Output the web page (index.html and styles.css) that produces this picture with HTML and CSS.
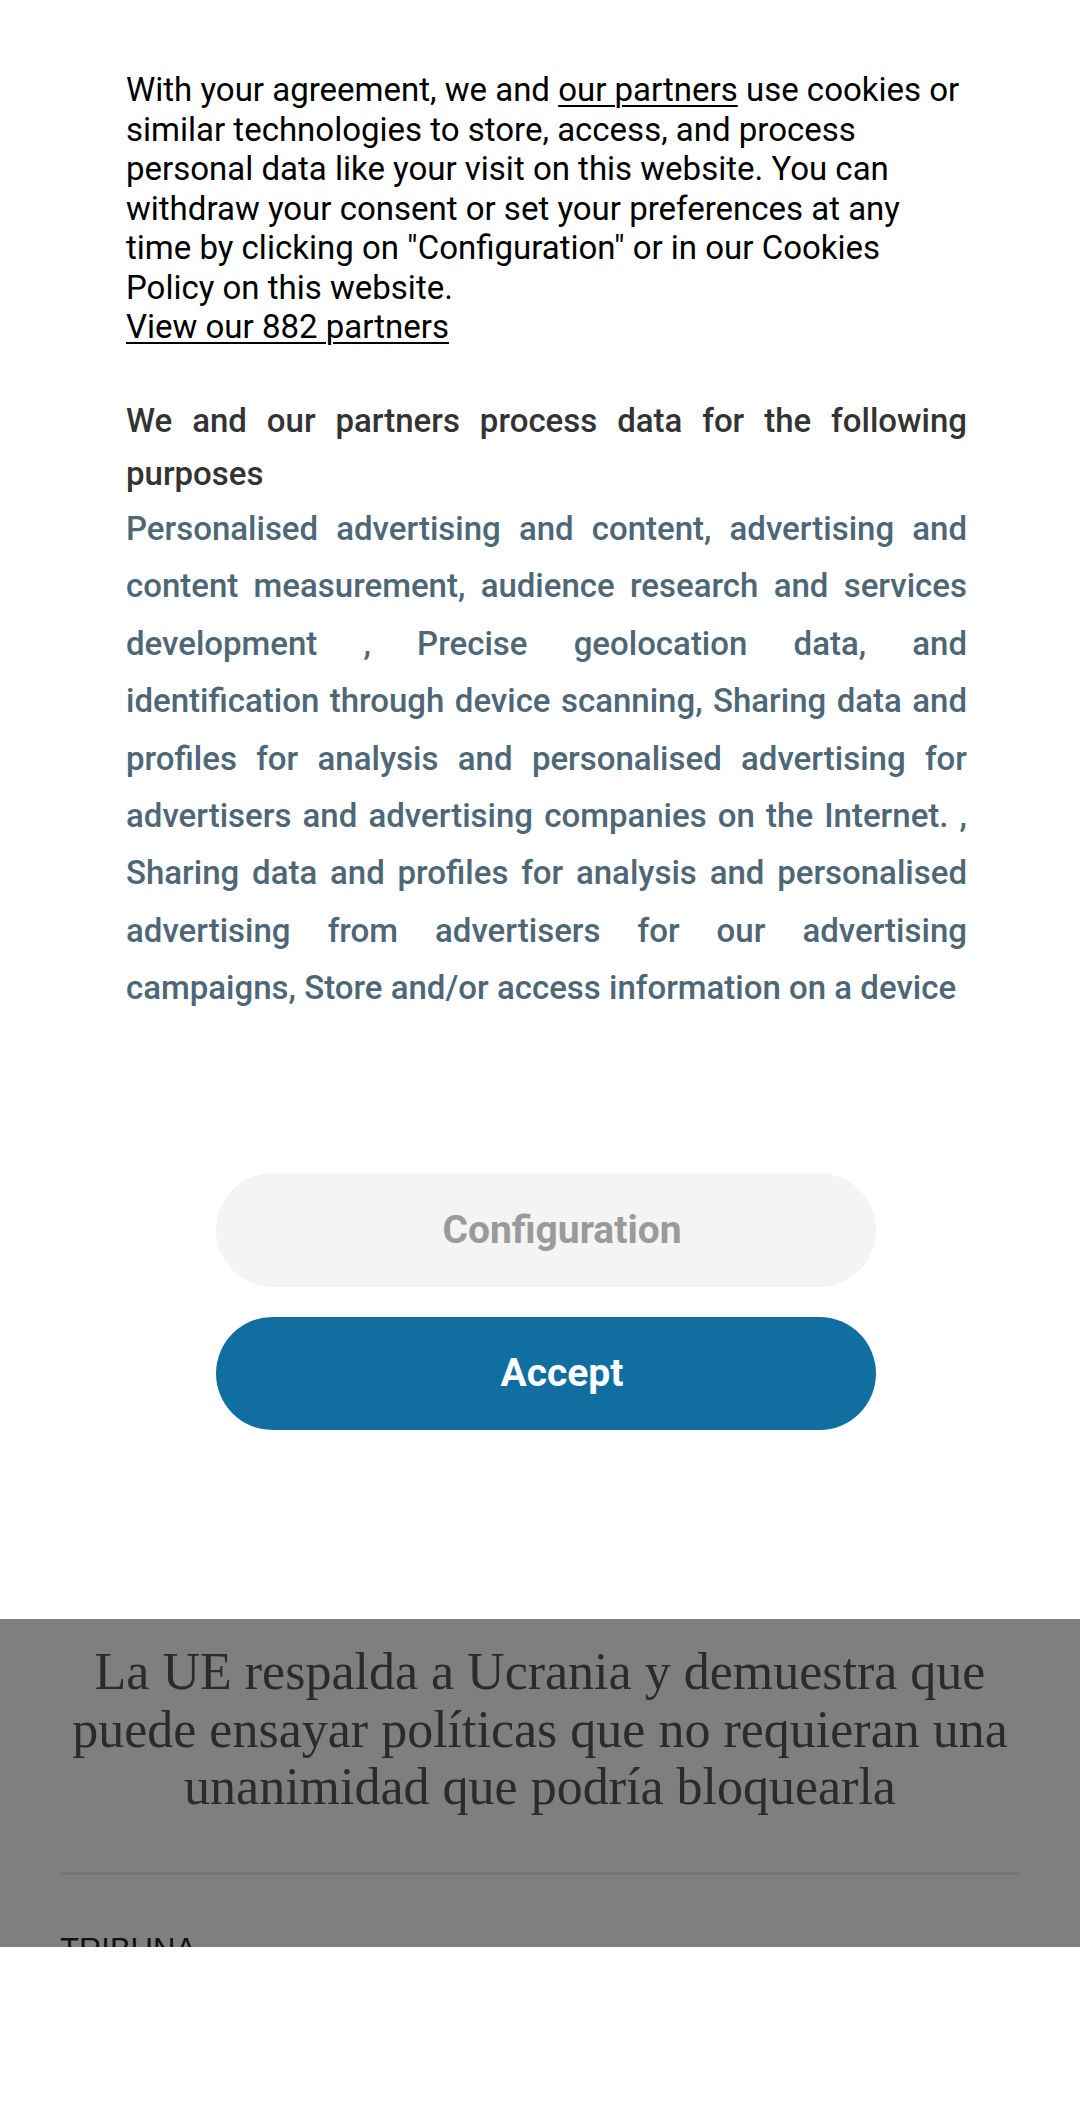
FILE: index.html
```html
<!DOCTYPE html>
<html lang="en">
<head>
<meta charset="utf-8">
<title>Consent</title>
<link rel="stylesheet" href="styles.css">
</head>
<body>
<div class="consent">
  <div class="content">
    <p class="intro">With your agreement, we and <a href="#" class="link">our partners</a> use cookies or similar technologies to store, access, and process personal data like your visit on this website. You can withdraw your consent or set your preferences at any time by clicking on "Configuration" or in our Cookies Policy on this website.<br><a href="#" class="link">View our 882 partners</a></p>
    <p class="purposes-title">We and our partners process data for the following purposes</p>
    <p class="purposes-list">Personalised advertising and content, advertising and content measurement, audience research and services development , Precise geolocation data, and identification through device scanning, Sharing data and profiles for analysis and personalised advertising for advertisers and advertising companies on the Internet. , Sharing data and profiles for analysis and personalised advertising from advertisers for our advertising campaigns, Store and/or access information on a device </p>
  </div>
  <div class="actions">
    <button class="btn btn-config" type="button">Configuration</button>
    <button class="btn btn-accept" type="button">Accept</button>
  </div>
</div>
<div class="article">
  <h1 class="article-title">La UE respalda a Ucrania y demuestra que puede ensayar políticas que no requieran una unanimidad que podría bloquearla</h1>
  <hr class="article-rule">
  <div class="article-section">TRIBUNA</div>
</div>
<div class="bottom"></div>
</body>
</html>
```
FILE: styles.css
```css
* { box-sizing: border-box; }
html, body { margin: 0; padding: 0; background: #fff; }
body { font-family: Roboto, "Noto Sans", sans-serif; width: 1080px; }

.consent {
  height: 1619px;
  background: #fff;
  display: flex;
  flex-direction: column;
}
.content {
  margin-left: 126px;
  width: 841px;
  padding-top: 70px;
}
.intro {
  margin: 0;
  font-size: 33px;
  line-height: 39.5px;
  color: #000;
}
.link { color: #000; text-decoration: underline; text-underline-offset: 4px; text-decoration-thickness: 2px; }

.purposes-title {
  margin: 47.5px 0 0;
  font-size: 33px;
  line-height: 53px;
  font-weight: 500;
  color: #333;
  text-align: justify;
}
.purposes-list {
  margin: 0;
  font-size: 33px;
  line-height: 57.4px;
  font-weight: 500;
  color: #4e6776;
  text-align: justify;
}

.actions {
  margin-top: 156px;
  display: flex;
  flex-direction: column;
  align-items: center;
  gap: 30px;
}
.btn {
  width: 660px;
  height: 114px;
  border: 0;
  border-radius: 57px;
  font-family: Roboto, sans-serif;
  font-size: 39px;
  font-weight: 700;
  padding: 0 0 0 32px;
  margin-left: 12px;
}
.btn-config { background: #f4f4f4; color: #9a9a9a; }
.btn-accept { background: #106ea0; color: #fff; height: 113px; }

.article {
  height: 328px;
  background: #7f7f7f;
  overflow: hidden;
  padding: 24px 56px 0;
}
.article-title {
  margin: 0;
  font-family: "Liberation Serif", "DejaVu Serif", serif;
  font-weight: 400;
  font-size: 52px;
  line-height: 57.5px;
  color: #2b2b2b;
  text-align: center;
}
.article-rule {
  margin: 56px 4px 0;
  border: 0;
  height: 3px;
  background: #747474;
}
.article-section {
  margin-top: 57px;
  margin-left: 4px;
  font-family: "Liberation Sans", Arial, sans-serif;
  font-size: 31px;
  color: #111;
}
.bottom { height: 168px; background: #fff; }
```
